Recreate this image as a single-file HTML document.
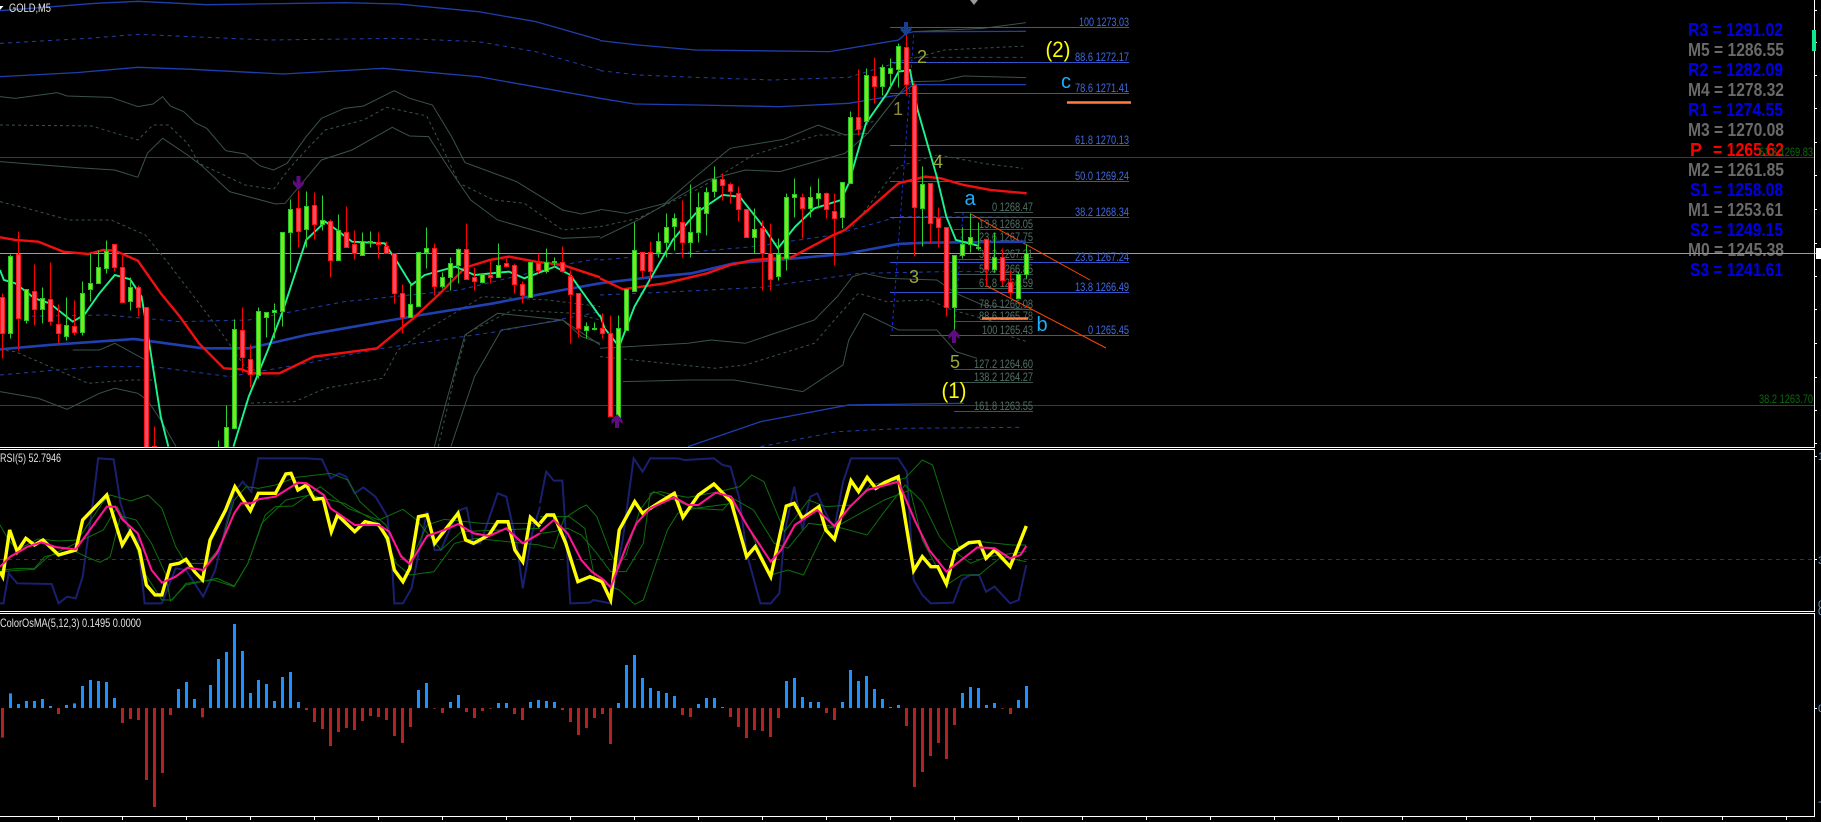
<!DOCTYPE html>
<html lang="en"><head><meta charset="utf-8"><title>GOLD,M5</title>
<style>
html,body{margin:0;padding:0;background:#000;width:1821px;height:822px;overflow:hidden}
svg{display:block;font-family:"Liberation Sans",sans-serif}
polyline,path.ns{vector-effect:non-scaling-stroke;fill:none}
.g1{stroke:#3a524c;stroke-width:1}
.g2{stroke:#3a524c;stroke-width:1;stroke-dasharray:3 3}
.b1{stroke:#1f3fae;stroke-width:1.3}
.b2{stroke:#1f3fae;stroke-width:1;stroke-dasharray:4 4}
.r{stroke:#f20f0f;stroke-width:2.4}
.bt{stroke:#2040b0;stroke-width:2.6}
.c{stroke:#18f58e;stroke-width:1.9}
.y{stroke:#ffff00;stroke-width:3.4}
.m{stroke:#ff1493;stroke-width:2.1}
.n{stroke:#1a1f70;stroke-width:2}
.gr{stroke:#0d700d;stroke-width:1}
.fb{fill:#4169e1;font-size:12px}
.fg{fill:#527066;font-size:12px}
.piv{font-size:18px;font-weight:bold}
.e{font-size:18px;fill:#9aa83a;text-anchor:middle}
.w{font-size:20px;fill:#1ab0ff;text-anchor:middle}
.yy{font-size:22px;fill:#ffff00}
.lb{fill:#e0e0e0;font-size:12px}
</style></head><body>
<svg xmlns="http://www.w3.org/2000/svg" width="1821" height="822" viewBox="0 0 1821 822">
<rect width="1821" height="822" fill="#000"/>

<!-- horizontal levels -->
<path d="M0 157.500H1814M0 405.500H1814" stroke="#0e5a0e" stroke-width="1"/>
<path d="M0 253.500H1821" stroke="#9a9a9a" stroke-width="1"/>

<!-- bands left half -->
<g transform="matrix(.3827,0,0,.3333,0,0)">
<polyline class="b1" points="0,32 250,10 360,4 540,14 900,8 1040,12 1250,35 1400,65 1568,120"/>
<polyline class="b2" points="0,130 230,115 360,103 700,120 1040,115 1250,125 1400,155 1568,210"/>
<polyline class="b1" points="0,230 200,218 360,202 500,208 740,222 1000,205 1250,230 1568,295"/>
<polyline class="g1" points="0,290 40,295 150,278 175,288 290,292 360,320 400,312 425,290 445,318 480,335 510,368 540,385 590,452 640,462 680,498 715,510 750,490 800,410 840,355 900,325 950,318 1030,272 1070,295 1130,315 1180,410 1215,488 1350,545 1470,630 1520,642 1568,630"/>
<polyline class="g2" points="0,375 240,378 360,420 400,375 440,375 490,430 520,490 640,555 715,568 760,500 800,450 850,390 950,360 1010,322 1115,348 1150,430 1200,550 1290,600 1370,610 1470,690 1568,680"/>
<polyline class="g1" points="0,485 200,503 300,510 360,532 385,460 425,415 490,465 530,500 600,575 720,612 745,610 840,480 920,450 1025,382 1070,408 1120,410 1170,500 1230,600 1300,660 1470,715 1568,710"/>
<polyline class="g2" points="0,605 70,625 180,660 290,660 380,705 440,790 500,880 580,1000 640,1100 700,1125"/>
<polyline class="g2" points="0,1050 40,1055 150,1110 230,1150 340,1140 400,1140"/>
<polyline class="g1" points="190,1050 260,1050 300,1030 380,1080"/>
<polyline class="g1" points="0,1175 100,1195 175,1228 260,1180 300,1165 360,1180 385,1200 420,1260 460,1340"/>
<polyline class="g2" points="640,1210 770,1205 850,1165 1000,1135 1040,1050 1100,1000 1260,890 1430,900 1568,920"/>
<polyline class="g1" points="1135,1340 1165,1210 1215,1005 1300,940 1470,960 1568,1035"/>
<polyline class="g2" points="1145,1340 1190,1120 1220,1000 1340,930 1500,940 1568,960"/>
<polyline class="g1" points="1178,1340 1240,1130 1310,990 1470,960 1520,1010 1568,1030"/>
<polyline class="b2" points="0,950 280,945 470,965 650,960 900,905 1200,870 1470,795 1568,775"/>
<polyline class="b2" points="0,1125 250,1100 400,1100 600,1130 800,1090 1000,1045 1300,995 1568,935"/>
</g>

<!-- bands right half -->
<g transform="matrix(.3827,0,0,.3333,600,0)">
<polyline class="b1" points="0,122 100,135 250,150 600,155 780,120 800,100 820,95 1113,94"/>
<polyline class="b2" points="0,212 100,225 250,232 450,240 650,232 770,190 815,172 1105,172"/>
<polyline class="b1" points="0,295 90,312 250,315 470,320 650,310 780,285 820,254 1113,254"/>
<polyline class="g1" points="0,628 70,640 170,610 250,530 340,445 480,418 570,375 640,405 700,400 775,290"/>
<polyline class="g2" points="0,680 100,655 260,565 400,465 570,405 640,405 720,360"/>
<polyline class="g1" points="0,715 100,660 280,540 380,510 470,515 640,460 700,400 775,290 810,245 890,243 950,228 1113,233"/>
<polyline class="g1" points="820,95 1000,85 1113,68"/>
<polyline class="g2" points="820,175 900,150 1113,138"/>
<polyline class="g2" points="885,465 1000,490 1105,505"/>
<polyline class="g2" points="660,680 780,500 880,465"/>
<polyline class="g1" points="0,1045 230,1030 290,1020 380,1030 560,960 620,890 660,830 690,820 750,835 880,840 930,880 1000,915 1130,930"/>
<polyline class="g2" points="0,1070 300,1105 380,1095 560,1030 620,950 675,880 750,905 860,900 920,930 1030,965"/>
<polyline class="g1" points="60,1145 230,1140 350,1140 530,1175 635,1095 650,1020 690,940 780,990 880,990 930,1055 985,1075"/>
<polyline class="g2" points="1060,1005 1115,1025"/>
<polyline class="b1" points="230,1340 420,1265 650,1215 950,1210"/>
<polyline class="b2" points="420,1340 620,1295 800,1285 1105,1282"/>
<polyline class="b2" points="0,780 200,760 400,740 610,705 780,650 1105,652"/>
<polyline class="b2" points="0,885 200,875 420,862 680,820 900,815 1105,815"/>
</g>

<!-- secondary fibo -->
<path d="M954 212.500H1033M954 229.500H1033M954 242.500H1033M954 259.500H1033M954 274.500H1033M954 288.500H1033M954 309.500H1033M954 321.500H1033M954 335.500H1033M954 369.500H1033M954 382.500H1033M954 411.500H1033" stroke="#3d5750" stroke-width="1"/>
<text class="fg" x="992" y="211" textLength="41" lengthAdjust="spacingAndGlyphs">0 1268.47</text>
<text class="fg" x="979" y="228" textLength="54" lengthAdjust="spacingAndGlyphs">13.8 1268.05</text>
<text class="fg" x="979" y="241" textLength="54" lengthAdjust="spacingAndGlyphs">23.6 1267.75</text>
<text class="fg" x="979" y="258" textLength="54" lengthAdjust="spacingAndGlyphs">38.2 1267.21</text>
<text class="fg" x="979" y="273" textLength="54" lengthAdjust="spacingAndGlyphs">50.0 1266.85</text>
<text class="fg" x="979" y="287" textLength="54" lengthAdjust="spacingAndGlyphs">61.8 1266.59</text>
<text class="fg" x="979" y="308" textLength="54" lengthAdjust="spacingAndGlyphs">78.6 1266.08</text>
<text class="fg" x="979" y="320" textLength="54" lengthAdjust="spacingAndGlyphs">88.6 1265.78</text>
<text class="fg" x="982" y="334" textLength="51" lengthAdjust="spacingAndGlyphs">100 1265.43</text>
<text class="fg" x="974" y="368" textLength="59" lengthAdjust="spacingAndGlyphs">127.2 1264.60</text>
<text class="fg" x="974" y="381" textLength="59" lengthAdjust="spacingAndGlyphs">138.2 1264.27</text>
<text class="fg" x="974" y="410" textLength="59" lengthAdjust="spacingAndGlyphs">161.8 1263.55</text>

<!-- main fibo -->
<path d="M890 27.500H1129M890 62.500H1129M890 93.500H1129M890 145.500H1129M890 181.500H1129M890 217.500H1129M890 262.500H1129M890 292.500H1129M890 335.500H1129" stroke="#2f55c8" stroke-width="1"/>
<text class="fb" x="1079" y="26" textLength="50" lengthAdjust="spacingAndGlyphs">100 1273.03</text>
<text class="fb" x="1075" y="61" textLength="54" lengthAdjust="spacingAndGlyphs">88.6 1272.17</text>
<text class="fb" x="1075" y="92" textLength="54" lengthAdjust="spacingAndGlyphs">78.6 1271.41</text>
<text class="fb" x="1075" y="144" textLength="54" lengthAdjust="spacingAndGlyphs">61.8 1270.13</text>
<text class="fb" x="1075" y="180" textLength="54" lengthAdjust="spacingAndGlyphs">50.0 1269.24</text>
<text class="fb" x="1075" y="216" textLength="54" lengthAdjust="spacingAndGlyphs">38.2 1268.34</text>
<text class="fb" x="1075" y="261" textLength="54" lengthAdjust="spacingAndGlyphs">23.6 1267.24</text>
<text class="fb" x="1075" y="291" textLength="54" lengthAdjust="spacingAndGlyphs">13.8 1266.49</text>
<text class="fb" x="1088" y="334" textLength="41" lengthAdjust="spacingAndGlyphs">0 1265.45</text>

<!-- dashed blue zigzag and trend lines -->
<path d="M892 331L914 31M954 335L963 213" stroke="#1a2ee0" stroke-width="1" stroke-dasharray="3 3" fill="none"/>
<path d="M971 214L1090 280M987 286L1106 348" stroke="#ff4500" stroke-width="1" fill="none"/>
<path d="M1067 102.500H1131M982 318.500H1028" stroke="#ff8040" stroke-width="2.500" fill="none"/>

<!-- moving averages -->
<g transform="matrix(.3827,0,0,.3333,0,0)">
<polyline class="bt" points="0,1048 130,1035 350,1017 530,1045 650,1045 800,1005 1000,965 1100,945 1290,910 1470,870 1568,850"/>
<polyline class="r" points="0,712 40,720 100,725 165,755 230,762 270,750 300,752 360,782 420,880 470,950 520,1030 585,1105 630,1108 660,1120 730,1120 820,1070 900,1058 985,1045 1080,955 1150,880 1215,803 1280,780 1330,770 1400,785 1470,795 1568,832"/>
<polyline class="c" points="0,810 10,840 40,850 90,895 130,910 190,965 220,945 260,880 300,825 340,838 370,890 390,1030 420,1250 440,1340"/>
<polyline class="c" points="610,1340 650,1190 700,1050 740,930 800,720 850,665 880,690 920,725 1005,730 1040,790 1075,855 1110,825 1190,800 1240,825 1330,815 1370,835 1450,800 1490,825 1568,950"/>
</g>
<g transform="matrix(.3827,0,0,.3333,600,0)">
<polyline class="bt" points="0,850 130,832 240,820 350,790 480,778 640,762 780,732 850,728 1113,725"/>
<polyline class="r" points="0,835 60,868 170,850 280,820 340,795 400,780 500,772 610,705 640,690 780,550 850,530 890,535 950,555 1020,570 1115,580"/>
<polyline class="c" points="0,945 12,985 50,1040 90,920 150,800 190,720 250,640 320,585 365,590 420,670 465,745 510,680 560,625 630,600 650,550 695,370 750,280 780,215 810,210 830,330 880,530 905,650 930,720 990,738"/>
</g>

<!-- candles -->
<g transform="translate(-.5,.5)" shape-rendering="crispEdges">
<path stroke="#ff0000" stroke-width="1" fill="none" d="M3 293V358M19 231V350M35 264V325M51 262V325M59 304V343M75 300V335M115 244V271M123 255V303M139 285V316M147 307V447M155 426V447M243 307V372M251 344V387M299 190V247M315 192V239M331 219V277M347 206V247M355 230V259M379 232V258M387 241V253M395 253V303M403 284V333M435 243V295M467 223V279M475 267V290M491 261V283M507 258V267M515 263V293M523 281V303M539 253V273M563 246V272M571 270V343M579 293V337M603 313V338M611 315V417M643 252V277M651 241V280M683 200V257M723 173V200M731 182V203M739 186V221M747 209V237M763 220V290M771 223V290M803 193V238M827 192V218M835 193V265M859 69V135M875 57V103M907 29V95M915 82V256M931 183V243M939 207V247M947 227V316M987 238V285M1003 248V285M1011 270V298"/>
<path stroke="#2ed02e" stroke-width="1" fill="none" d="M11 254V338M27 289V323M43 287V323M67 297V340M83 281V335M91 253V301M99 250V283M107 240V273M131 277V310M219 440V447M227 405V447M235 319V428M259 307V378M267 312V337M275 303V338M283 232V326M291 199V272M307 191V247M323 195V230M339 214V260M363 232V255M371 231V247M411 283V317M419 252V306M427 227V268M443 272V288M451 257V290M459 248V283M483 273V283M499 243V277M531 262V297M547 248V273M555 257V267M587 322V338M595 322V330M619 315V418M627 289V330M635 222V291M659 232V257M667 213V257M675 213V250M691 184V257M699 192V242M707 187V235M715 166V197M755 208V253M779 238V280M787 193V270M795 178V217M811 186V217M819 178V208M843 182V228M851 111V183M867 68V121M883 64V95M891 58V87M899 43V87M923 166V246M955 255V337M963 227V258M971 213V252M979 222V250M995 232V272M1019 272V298M1027 244V278"/>
<path stroke="#ff1414" stroke-width="1" fill="#e8506e" d="M1 297h4v36h-4zM17 254h4v64h-4zM33 291h4v18h-4zM49 299h4v22h-4zM57 324h4v9h-4zM73 326h4v6h-4zM113 244h4v23h-4zM121 267h4v35h-4zM137 287h4v20h-4zM145 307h4v140h-4zM153 446h4v2h-4zM241 330h4v27h-4zM249 359h4v15h-4zM297 208h4v23h-4zM313 205h4v19h-4zM329 221h4v39h-4zM345 232h4v15h-4zM353 244h4v9h-4zM377 242h4v2h-4zM385 246h4v7h-4zM393 253h4v40h-4zM401 293h4v24h-4zM433 248h4v38h-4zM465 249h4v30h-4zM473 277h4v4h-4zM489 275h4v2h-4zM505 263h4v3h-4zM513 265h4v19h-4zM521 284h4v11h-4zM537 263h4v7h-4zM561 262h4v9h-4zM569 276h4v18h-4zM577 293h4v35h-4zM601 328h4v5h-4zM609 333h4v83h-4zM641 252h4v18h-4zM649 252h4v19h-4zM681 222h4v20h-4zM721 179h4v6h-4zM729 184h4v7h-4zM737 193h4v16h-4zM745 209h4v28h-4zM761 228h4v25h-4zM769 253h4v26h-4zM801 197h4v11h-4zM825 193h4v16h-4zM833 211h4v7h-4zM857 117h4v12h-4zM873 76h4v10h-4zM905 47h4v37h-4zM913 85h4v122h-4zM929 183h4v40h-4zM937 218h4v9h-4zM945 227h4v80h-4zM985 239h4v30h-4zM1001 257h4v23h-4zM1009 282h4v10h-4z"/>
<path stroke="#28c828" stroke-width="1" fill="#80e818" d="M9 256h4v77h-4zM25 289h4v31h-4zM41 298h4v11h-4zM65 325h4v11h-4zM81 293h4v39h-4zM89 283h4v6h-4zM97 267h4v16h-4zM105 251h4v17h-4zM129 287h4v14h-4zM225 427h4v20h-4zM233 329h4v99h-4zM257 311h4v64h-4zM265 312h4v5h-4zM273 310h4v2h-4zM281 232h4v79h-4zM289 209h4v23h-4zM305 206h4v23h-4zM321 220h4v4h-4zM337 230h4v30h-4zM361 241h4v14h-4zM369 241h4v1h-4zM409 304h4v13h-4zM417 252h4v54h-4zM425 248h4v4h-4zM441 277h4v9h-4zM449 263h4v14h-4zM457 249h4v16h-4zM481 274h4v8h-4zM497 265h4v12h-4zM529 262h4v35h-4zM545 262h4v9h-4zM553 261h4v1h-4zM585 326h4v4h-4zM593 328h4v1h-4zM617 328h4v89h-4zM625 289h4v41h-4zM633 250h4v41h-4zM657 241h4v11h-4zM665 227h4v15h-4zM673 218h4v8h-4zM689 232h4v10h-4zM697 207h4v25h-4zM705 192h4v21h-4zM713 179h4v12h-4zM753 229h4v8h-4zM777 254h4v22h-4zM785 197h4v61h-4zM793 194h4v3h-4zM809 197h4v11h-4zM817 193h4v5h-4zM841 182h4v35h-4zM849 117h4v66h-4zM865 75h4v46h-4zM881 67h4v19h-4zM889 68h4v5h-4zM897 46h4v23h-4zM921 184h4v24h-4zM953 255h4v52h-4zM961 244h4v11h-4zM969 237h4v7h-4zM977 247h4v1h-4zM993 257h4v12h-4zM1017 274h4v24h-4zM1025 253h4v21h-4z"/>
</g>

<!-- arrows -->
<path d="M296.500 176h4v7l3.500-3v4l-5.500 6-5.500-6v-4l3.500 3z" fill="#5f0c80"/>
<path d="M904 22h4v7l3.500-3v4l-5.500 6-5.500-6v-4l3.500 3z" fill="#1a3f8c"/>
<path d="M615 428h4v-7l3.500 3v-4l-5.500-6-5.500 6v4l3.500-3z" fill="#5f0c80"/>
<path d="M952 343h4v-7l3.500 3v-4l-5.500-6-5.500 6v4l3.500-3z" fill="#5f0c80"/>

<!-- wave labels -->
<text class="e" x="898" y="115" style="fill:#8a8a30">1</text>
<text class="e" x="922" y="63">2</text>
<text class="e" x="914" y="283">3</text>
<text class="e" x="938" y="168">4</text>
<text class="e" x="955" y="368">5</text>
<text class="w" x="970" y="205">a</text>
<text class="w" x="1042" y="331">b</text>
<text class="w" x="1066" y="88">c</text>
<text class="yy" x="1045.500" y="57" textLength="25" lengthAdjust="spacingAndGlyphs">(2)</text>
<text class="yy" x="941.500" y="398" textLength="25" lengthAdjust="spacingAndGlyphs">(1)</text>

<!-- top markers -->
<path d="M970 0h8l-4 5z" fill="#9a9a9a"/>
<path d="M0 6h3.500L0 10z" fill="#fff"/>
<text class="lb" x="9" y="12" textLength="42" lengthAdjust="spacingAndGlyphs">GOLD,M5</text>

<!-- pivots -->
<g class="piv" xml:space="preserve">
<text x="1688" y="36" fill="#0000e0" textLength="95" lengthAdjust="spacingAndGlyphs">R3 = 1291.02</text>
<text x="1688" y="56" fill="#696969" textLength="96" lengthAdjust="spacingAndGlyphs">M5 = 1286.55</text>
<text x="1688" y="76" fill="#0000e0" textLength="95" lengthAdjust="spacingAndGlyphs">R2 = 1282.09</text>
<text x="1688" y="96" fill="#696969" textLength="96" lengthAdjust="spacingAndGlyphs">M4 = 1278.32</text>
<text x="1688" y="116" fill="#0000e0" textLength="95" lengthAdjust="spacingAndGlyphs">R1 = 1274.55</text>
<text x="1688" y="136" fill="#696969" textLength="96" lengthAdjust="spacingAndGlyphs">M3 = 1270.08</text>
<text x="1690" y="156" fill="#ff0000" font-size="18">P</text>
<text x="1713" y="156" fill="#ff0000" textLength="71" lengthAdjust="spacingAndGlyphs">= 1265.62</text>
<text x="1688" y="176" fill="#696969" textLength="96" lengthAdjust="spacingAndGlyphs">M2 = 1261.85</text>
<text x="1690" y="196" fill="#0000e0" textLength="93" lengthAdjust="spacingAndGlyphs">S1 = 1258.08</text>
<text x="1688" y="216" fill="#696969" textLength="95" lengthAdjust="spacingAndGlyphs">M1 = 1253.61</text>
<text x="1690" y="236" fill="#0000e0" textLength="93" lengthAdjust="spacingAndGlyphs">S2 = 1249.15</text>
<text x="1688" y="256" fill="#696969" textLength="96" lengthAdjust="spacingAndGlyphs">M0 = 1245.38</text>
<text x="1690" y="276" fill="#0000e0" textLength="93" lengthAdjust="spacingAndGlyphs">S3 = 1241.61</text>
</g>
<path d="M1688 253.500H1821" stroke="#9a9a9a" stroke-width="1" opacity=".8"/>
<text x="1759" y="156" font-size="12" fill="#0a6a0a" textLength="54" lengthAdjust="spacingAndGlyphs">61.8 1269.83</text>
<text x="1759" y="403" font-size="12" fill="#0a6a0a" textLength="54" lengthAdjust="spacingAndGlyphs">38.2 1263.70</text>

<!-- lower panels mask -->
<rect x="0" y="448" width="1821" height="374" fill="#000"/>

<!-- RSI panel -->
<path d="M0 559.500H1814" stroke="#6a0f6a" stroke-width="1" stroke-dasharray="4 4"/>
<g transform="matrix(.3444,0,0,.3333,0,440)">
<polyline class="n" points="0,490 10,490 25,400 50,430 150,432 170,490 195,470 220,475 240,410 270,185 285,55 330,58 350,190 375,270 400,300 420,490 470,490 510,385 540,390 590,470 625,390 660,240 680,155 705,125 730,155 750,55 890,55 935,58 960,115 985,100 1005,110 1030,160 1055,142 1090,170 1125,230 1140,400 1145,490 1170,490 1195,445 1240,215 1262,330 1280,330 1330,212 1355,203 1375,310 1395,310 1445,160 1470,170 1500,310 1518,445 1545,280 1568,200"/>
<polyline class="gr" points="0,255 25,300 50,330 110,297 170,303 225,300 300,185 320,165 380,183 430,165 470,205 510,320 540,370 600,370 640,320 680,180 715,140 750,145 800,135 860,112 960,100 1010,120 1045,185 1120,255 1160,340 1190,370 1240,255 1290,238 1400,250 1568,250"/>
<polyline class="gr" points="0,390 60,385 100,385 130,350 210,330 250,350 290,367 320,350 350,228 395,240 440,310 480,400 495,483 540,435 630,415 680,438 720,370 770,225 800,200 850,198 930,140 1010,205 1100,240 1170,208 1210,240 1280,330 1340,275 1568,265"/>
<polyline class="gr" points="0,395 100,388 140,350 220,310 300,270 340,200 385,285 420,400 470,480 500,480 540,430 620,420 680,440 720,370 760,250 830,180 900,165 1000,190 1100,250 1150,370 1190,405 1260,395 1320,310 1380,295 1568,315"/>
<polyline class="y" points="0,395 8,410 28,270 50,335 75,295 100,315 125,300 170,345 220,330 240,240 310,165 355,315 378,275 405,330 425,435 450,465 470,465 495,375 520,370 540,358 565,395 588,420 610,300 655,210 682,140 727,212 750,160 800,160 830,102 845,100 865,150 890,135 912,178 938,175 962,275 980,225 1030,275 1060,245 1100,255 1125,295 1145,390 1170,425 1190,385 1215,230 1240,225 1262,310 1330,220 1352,300 1375,310 1420,285 1445,245 1475,245 1495,330 1518,365 1540,232 1568,260"/>
<polyline class="m" points="0,380 30,350 80,320 120,307 165,322 220,328 310,200 335,200 355,238 400,280 440,390 470,428 510,410 545,383 590,390 630,340 680,220 700,190 730,190 750,178 800,170 865,128 890,130 940,165 960,205 1030,255 1100,255 1130,275 1165,350 1190,372 1240,288 1290,270 1330,252 1375,280 1420,288 1470,265 1518,310 1568,280"/>
</g>
<g transform="matrix(.3444,0,0,.3333,540,440)">
<polyline class="n" points="0,190 18,95 40,122 65,122 88,490 145,488 155,480 205,490 240,300 272,55 298,95 320,55 400,55 420,60 505,55 530,75 553,80 580,180 600,340 640,490 670,490 695,460 710,280 738,140 762,270 785,170 805,160 830,220 855,265 880,125 903,55 1040,55 1065,95 1085,420 1110,465 1135,490 1200,488 1225,420 1250,405 1275,405 1295,455 1320,440 1365,490 1390,480 1412,375"/>
<polyline class="gr" points="0,280 40,275 80,265 120,285 165,340 205,395 250,395 300,310 320,160 350,155 390,165 430,172 520,155 580,140 615,105 650,125 680,200 710,275 780,180 830,200 905,195 960,135 1060,115 1110,60 1140,75 1190,240 1215,320 1280,305 1370,315 1412,315"/>
<polyline class="gr" points="0,317 40,325 70,235 115,205 135,195 165,230 205,340 225,380 250,345 290,210 330,155 450,205 530,210 560,175 620,210 680,310 720,325 780,250 860,260 950,285 1000,215 1060,135 1110,185 1160,290 1185,320 1250,370 1300,350 1412,335"/>
<polyline class="gr" points="0,230 85,230 130,265 160,420 230,450 275,493 300,480 370,270 400,220 450,205 560,190 600,250 670,405 720,390 765,405 830,265 860,260 1000,180 1075,150 1110,300 1180,435 1225,405 1275,405 1340,350 1412,365"/>
<polyline class="y" points="0,250 20,225 40,225 75,310 110,425 145,410 180,425 205,480 230,270 275,185 298,220 350,185 390,160 415,232 460,165 505,132 555,185 600,350 625,320 670,410 715,198 738,190 762,235 810,200 830,270 855,298 903,122 925,155 950,112 975,145 1000,128 1040,110 1085,392 1110,350 1135,380 1155,380 1180,432 1205,335 1245,308 1275,305 1295,355 1320,330 1365,380 1412,258"/>
<polyline class="m" points="0,275 40,240 80,280 120,360 150,395 185,420 205,442 250,320 280,250 320,205 390,172 430,195 460,195 510,158 555,170 600,255 670,365 700,330 740,255 805,210 855,258 900,200 950,150 1040,125 1090,245 1130,330 1180,395 1270,322 1320,325 1365,355 1395,345 1412,318"/>
</g>
<text class="lb" x="0" y="462" textLength="61" lengthAdjust="spacingAndGlyphs">RSI(5) 52.7946</text>

<!-- OsMA panel -->
<text class="lb" x="0" y="627" textLength="141" lengthAdjust="spacingAndGlyphs">ColorOsMA(5,12,3) 0.1495 0.0000</text>
<g transform="matrix(1,0,0,.33333,0,440)" fill="none" stroke-width="3">
<path class="ns" stroke="#1e90ff" stroke-width="3" d="M10.500 804V760M18.500 804V792M26.500 804V783M34.500 804V783M42.500 804V777M50.500 804V798M66.500 804V795M74.500 804V790M82.500 804V738M90.500 804V720M98.500 804V723M106.500 804V726M114.500 804V774M178.500 804V747M186.500 804V726M194.500 804V777M210.500 804V735M218.500 804V657M226.500 804V636M234.500 804V552M242.500 804V633M250.500 804V759M258.500 804V720M266.500 804V732M274.500 804V783M282.500 804V711M290.500 804V696M298.500 804V786M418.500 804V750M426.500 804V729M450.500 804V786M458.500 804V765M498.500 804V789M506.500 804V789M530.500 804V786M538.500 804V780M546.500 804V783M554.500 804V786M618.500 804V789M626.500 804V675M634.500 804V645M642.500 804V714M650.500 804V744M658.500 804V753M666.500 804V759M674.500 804V768M698.500 804V792M706.500 804V774M714.500 804V774M722.500 804V801M786.500 804V723M794.500 804V714M802.500 804V771M810.500 804V786M818.500 804V786M842.500 804V786M850.500 804V690M858.500 804V723M866.500 804V708M874.500 804V747M882.500 804V777M890.500 804V801M898.500 804V795M962.500 804V759M970.500 804V741M978.500 804V744M986.500 804V795M994.500 804V789M1018.500 804V780M1026.500 804V738"/>
<path class="ns" stroke="#b22222" stroke-width="3" d="M2.500 804V893M58.500 804V822M122.500 804V849M130.500 804V837M138.500 804V840M146.500 804V1020M154.500 804V1101M162.500 804V999M170.500 804V825M202.500 804V832M306.500 804V810M314.500 804V846M322.500 804V867M330.500 804V918M338.500 804V876M346.500 804V864M354.500 804V870M362.500 804V843M370.500 804V828M378.500 804V831M386.500 804V840M394.500 804V888M402.500 804V909M410.500 804V861M434.500 804V806M442.500 804V819M466.500 804V816M474.500 804V834M482.500 804V813M490.500 804V806M514.500 804V822M522.500 804V840M562.500 804V810M570.500 804V846M578.500 804V885M586.500 804V864M594.500 804V834M602.500 804V822M610.500 804V912M682.500 804V825M690.500 804V831M730.500 804V831M738.500 804V861M746.500 804V894M754.500 804V870M762.500 804V873M770.500 804V891M778.500 804V834M826.500 804V819M834.500 804V840M906.500 804V858M914.500 804V1041M922.500 804V996M930.500 804V948M938.500 804V909M946.500 804V957M954.500 804V855M1002.500 804V806M1010.500 804V822"/>
</g>

<!-- frames -->
<path d="M0 447.500H1815M0 449.500H1815M0 611.500H1815M0 613.500H1815M0 816.500H1815M1814.500 0V447.500M1814.500 449.500V611.500M1814.500 613.500V816.500" stroke="#fff" stroke-width="1" fill="none"/>
<!-- right ticks -->
<path d="M1815 10.500h2M1815 42.500h2M1815 75.500h2M1815 108.500h2M1815 142.500h2M1815 175.500h2M1815 209.500h2M1815 243.500h2M1815 276.500h2M1815 309.500h2M1815 343.500h2M1815 377.500h2M1815 410.500h2M1815 443.500h2M1815 456.500h2M1815 559.500h2M1815 708.500h2" stroke="#fff" stroke-width="1"/>
<!-- bottom ticks -->
<path d="M58.500 817v3M122.500 817v3M186.500 817v3M250.500 817v3M314.500 817v3M378.500 817v3M442.500 817v3M506.500 817v3M570.500 817v3M634.500 817v3M698.500 817v3M762.500 817v3M826.500 817v3M890.500 817v3M954.500 817v3M1018.500 817v3M1082.500 817v3M1146.500 817v3M1210.500 817v3M1274.500 817v3M1338.500 817v3M1402.500 817v3M1466.500 817v3M1530.500 817v3M1594.500 817v3M1658.500 817v3M1722.500 817v3M1786.500 817v3" stroke="#fff" stroke-width="1"/>
<!-- price markers -->
<rect x="1812" y="30" width="4" height="21" fill="#0fe88c"/>
<rect x="1816" y="248" width="5" height="11" fill="#fff"/>
<!-- clipped axis labels -->
<g font-size="11" fill="#5aa8f0">
<text x="1818" y="460">100</text>
<text x="1818" y="564">30</text>
<text x="1818" y="608">0</text>
<text x="1818" y="615">0</text>
<text x="1818" y="712">0</text>
<text x="1818" y="805">-</text>
</g>
</svg>
</body></html>
